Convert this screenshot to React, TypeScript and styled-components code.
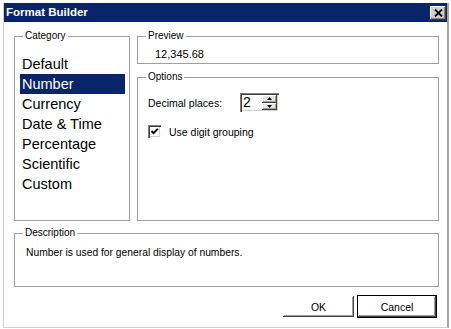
import styled, { createGlobalStyle } from "styled-components";

const GlobalStyle = createGlobalStyle`
  html, body {
    margin: 0;
    padding: 0;
    background: #ffffff;
  }
  body {
    font-family: "Liberation Sans", Arial, sans-serif;
    color: #000;
  }
`;

const categories = [
  "Default",
  "Number",
  "Currency",
  "Date & Time",
  "Percentage",
  "Scientific",
  "Custom",
];

export default function App() {
  return (
    <>
      <GlobalStyle />
      <Window>
        <TitleBar>
          <Title>Format Builder</Title>
          <CloseButton aria-label="Close">
            <svg width="9" height="8" viewBox="0 0 9 8">
              <path d="M1 0.5 L8 7.5 M8 0.5 L1 7.5" stroke="#000" strokeWidth="1.8" />
            </svg>
          </CloseButton>
        </TitleBar>
        <Body>
          <TopRow>
            <Group $width={116} $height={192}>
              <Legend>Category</Legend>
              <List>
                {categories.map((c) => (
                  <ListItem key={c} $selected={c === "Number"}>
                    {c}
                  </ListItem>
                ))}
              </List>
            </Group>
            <RightColumn>
              <Group $height={35}>
                <Legend>Preview</Legend>
                <PreviewText>12,345.68</PreviewText>
              </Group>
              <Group $height={151}>
                <Legend>Options</Legend>
                <OptionsBody>
                  <FieldRow>
                    <FieldLabel>Decimal places:</FieldLabel>
                    <Spin>
                      <SpinInput>2</SpinInput>
                      <SpinButtons>
                        <SpinButton>
                          <svg width="5" height="3" viewBox="0 0 5 3">
                            <path d="M2.5 0 L5 3 L0 3 Z" fill="#000" />
                          </svg>
                        </SpinButton>
                        <SpinButton>
                          <svg width="5" height="3" viewBox="0 0 5 3">
                            <path d="M0 0 L5 0 L2.5 3 Z" fill="#000" />
                          </svg>
                        </SpinButton>
                      </SpinButtons>
                    </Spin>
                  </FieldRow>
                  <CheckRow>
                    <CheckBox>
                      <svg width="9" height="9" viewBox="0 0 9 9">
                        <path
                          d="M1.5 4 L3.5 6.2 L7.8 1.8"
                          stroke="#000"
                          strokeWidth="1.9"
                          fill="none"
                        />
                      </svg>
                    </CheckBox>
                    <CheckLabel>Use digit grouping</CheckLabel>
                  </CheckRow>
                </OptionsBody>
              </Group>
            </RightColumn>
          </TopRow>
          <Group $height={61}>
            <Legend>Description</Legend>
            <DescriptionText>Number is used for general display of numbers.</DescriptionText>
          </Group>
          <ButtonRow>
            <PushButton $width={73}>OK</PushButton>
            <PushButton $width={80} $default>
              Cancel
            </PushButton>
          </ButtonRow>
        </Body>
      </Window>
    </>
  );
}

const Window = styled.div`
  box-sizing: border-box;
  width: 446px;
  margin: 3px 0 0 3px;
  border-left: 1px solid #d4d0c8;
  border-right: 2px solid #a4a4a4;
  border-bottom: 1px solid #d4d0c8;
  background: #fff;
`;

const TitleBar = styled.div`
  height: 19px;
  background: #0a246a;
  display: flex;
  align-items: center;
  justify-content: space-between;
  padding: 0 1px 0 2px;
`;

const Title = styled.span`
  color: #fff;
  font-weight: bold;
  font-size: 11.5px;
  line-height: 19px;
`;

const CloseButton = styled.div`
  box-sizing: border-box;
  width: 16px;
  height: 14px;
  background: #d4d0c8;
  display: flex;
  align-items: center;
  justify-content: center;
  box-shadow: inset -1px -1px #404040, inset 1px 1px #fff, inset -2px -2px #808080;
`;

const Body = styled.div`
  padding: 7px 8px 9px 10px;
  display: flex;
  flex-direction: column;
  gap: 5px;
`;

const TopRow = styled.div`
  display: flex;
  gap: 7px;
`;

const RightColumn = styled.div`
  flex: 1;
  display: flex;
  flex-direction: column;
  gap: 6px;
`;

const Group = styled.fieldset<{ $width?: number; $height: number }>`
  box-sizing: border-box;
  margin: 0;
  padding: 0;
  min-width: 0;
  border: 1px solid #a0a0a0;
  width: ${(p) => (p.$width ? `${p.$width}px` : "auto")};
  height: ${(p) => p.$height}px;
`;

const Legend = styled.legend`
  font-size: 10px;
  line-height: 14px;
  padding: 0 2px;
  margin-left: 8px;
`;

const List = styled.div`
  margin: 11px 4px 0 5px;
  display: flex;
  flex-direction: column;
`;

const ListItem = styled.div<{ $selected?: boolean }>`
  height: 20px;
  line-height: 20px;
  font-size: 14.5px;
  padding-left: 2px;
  white-space: nowrap;
  background: ${(p) => (p.$selected ? "#0a246a" : "transparent")};
  color: ${(p) => (p.$selected ? "#fff" : "#000")};
`;

const PreviewText = styled.div`
  font-size: 11px;
  line-height: 13px;
  padding: 5px 0 0 17px;
`;

const OptionsBody = styled.div`
  padding: 9px 0 0 10px;
  display: flex;
  flex-direction: column;
`;

const FieldRow = styled.div`
  display: flex;
  align-items: center;
  height: 19px;
`;

const FieldLabel = styled.span`
  width: 92px;
  font-size: 10.5px;
`;

const Spin = styled.div`
  box-sizing: border-box;
  width: 39px;
  height: 19px;
  display: flex;
  align-items: stretch;
  padding: 2px;
  background: #fff;
  box-shadow: inset 1px 1px #808080, inset 2px 2px #404040, inset -1px -1px #fff,
    inset -2px -2px #d4d0c8;
`;

const SpinInput = styled.div`
  flex: 1;
  font-size: 14px;
  line-height: 15px;
  padding-left: 1px;
`;

const SpinButtons = styled.div`
  width: 15px;
  display: flex;
  flex-direction: column;
`;

const SpinButton = styled.div`
  flex: 1;
  background: #e4e4e4;
  display: flex;
  align-items: center;
  justify-content: center;
  box-shadow: inset -1px -1px #404040, inset 1px 1px #fff, inset -2px -2px #a0a0a0;
`;

const CheckRow = styled.div`
  display: flex;
  align-items: center;
  gap: 8px;
  margin-top: 13px;
`;

const CheckBox = styled.div`
  box-sizing: border-box;
  width: 13px;
  height: 13px;
  background: #fff;
  display: flex;
  align-items: center;
  justify-content: center;
  box-shadow: inset 1px 1px #808080, inset 2px 2px #404040, inset -1px -1px #fff,
    inset -2px -2px #d4d0c8;
`;

const CheckLabel = styled.span`
  font-size: 10.5px;
`;

const DescriptionText = styled.div`
  font-size: 10.3px;
  line-height: 13px;
  padding: 6px 0 0 11px;
`;

const ButtonRow = styled.div`
  display: flex;
  justify-content: flex-end;
  gap: 2px;
  margin-top: 3px;
  padding-right: 2px;
`;

const PushButton = styled.div<{ $width: number; $default?: boolean }>`
  box-sizing: border-box;
  width: ${(p) => p.$width}px;
  height: 23px;
  font-size: 10.5px;
  display: flex;
  align-items: center;
  justify-content: center;
  background: #fff;
  border: 1px solid ${(p) => (p.$default ? "#000" : "transparent")};
  box-shadow: inset -1px -1px #404040, inset 1px 1px #fff, inset -2px -2px #a0a0a0;
`;
